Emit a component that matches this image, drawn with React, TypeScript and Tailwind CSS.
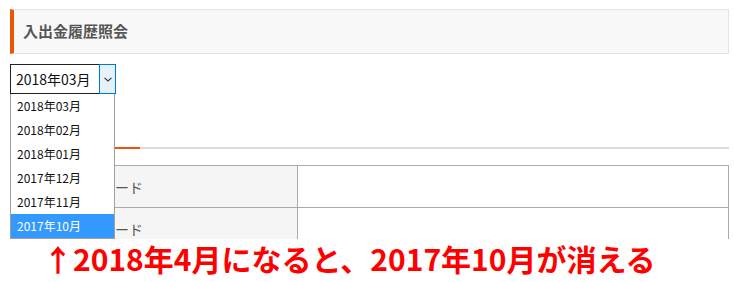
import React from "react";

const months = ["2018年03月", "2018年02月", "2018年01月", "2017年12月", "2017年11月", "2017年10月"];

// the labels are mostly hidden behind the open list; only the tail shows
const rows = ["ード", "ード"];

function MonthSelect() {
  return (
    <div className="relative mt-[10px] ml-[10px] flex h-[30px] w-[106px]">
      <div className="flex flex-1 items-center border border-r-0 border-[#222] pl-[5px] text-[14px] text-[#111]">
        2018年03月
      </div>
      <div className="flex w-[17px] items-center justify-center border border-[#0078d7] bg-[#e5f1fb]">
        <svg width="8" height="5" viewBox="0 0 8 5" fill="none">
          <path d="M0.5 0.8 L4 4 L7.5 0.8" stroke="#333" strokeWidth="1.1" />
        </svg>
      </div>

      {/* open list */}
      <ul className="absolute left-0 top-[30px] z-10 w-[105px] border border-t-0 border-[#a0a0a0] bg-white">
        {months.map((m, i) => (
          <li
            key={m}
            className={
              i === months.length - 1
                ? "flex h-[24px] items-center bg-[#3399ff] pl-[6px] text-[12px] text-white"
                : "flex h-[24px] items-center pl-[6px] text-[12px] text-[#111]"
            }
          >
            {m}
          </li>
        ))}
      </ul>
    </div>
  );
}

export default function App() {
  return (
    <div
      className="h-[282px] w-[734px] bg-white"
      style={{ fontFamily: '"Noto Sans CJK JP", "Noto Sans", sans-serif' }}
    >
      <div className="h-[239px] overflow-hidden pt-[9px]">
        <div className="ml-[10px] mr-[5px] flex h-[45px] items-center border border-l-4 border-[#e4e4e4] border-l-[#eb5505] bg-[#f8f8f8] pl-[9px]">
          <h1 className="text-[15px] font-bold text-[#555]">入出金履歴照会</h1>
        </div>

        <MonthSelect />

        <div className="ml-[10px] mr-[5px] mt-[53px] flex">
          <div className="h-[2px] w-[130px] bg-[#eb5505]" />
          <div className="h-[2px] flex-1 bg-[#dcdcdc]" />
        </div>

        <table className="ml-[10px] mt-[16px] w-[719px] border-collapse">
          <tbody>
            {rows.map((r, i) => (
              <tr key={i} className="h-[42px]">
                <th className="w-[287px] border border-[#aaa] bg-[#f5f5f5] pl-[104px] text-left text-[14px] font-normal leading-[14px] text-[#555]">
                  {r}
                </th>
                <td className="border border-[#aaa]" />
              </tr>
            ))}
          </tbody>
        </table>
      </div>

      <p className="ml-[43px] mt-[4px] text-[30px] font-bold leading-[30px] text-[#ff0000]">
        ↑2018年4月になると、2017年10月が消える
      </p>
    </div>
  );
}
